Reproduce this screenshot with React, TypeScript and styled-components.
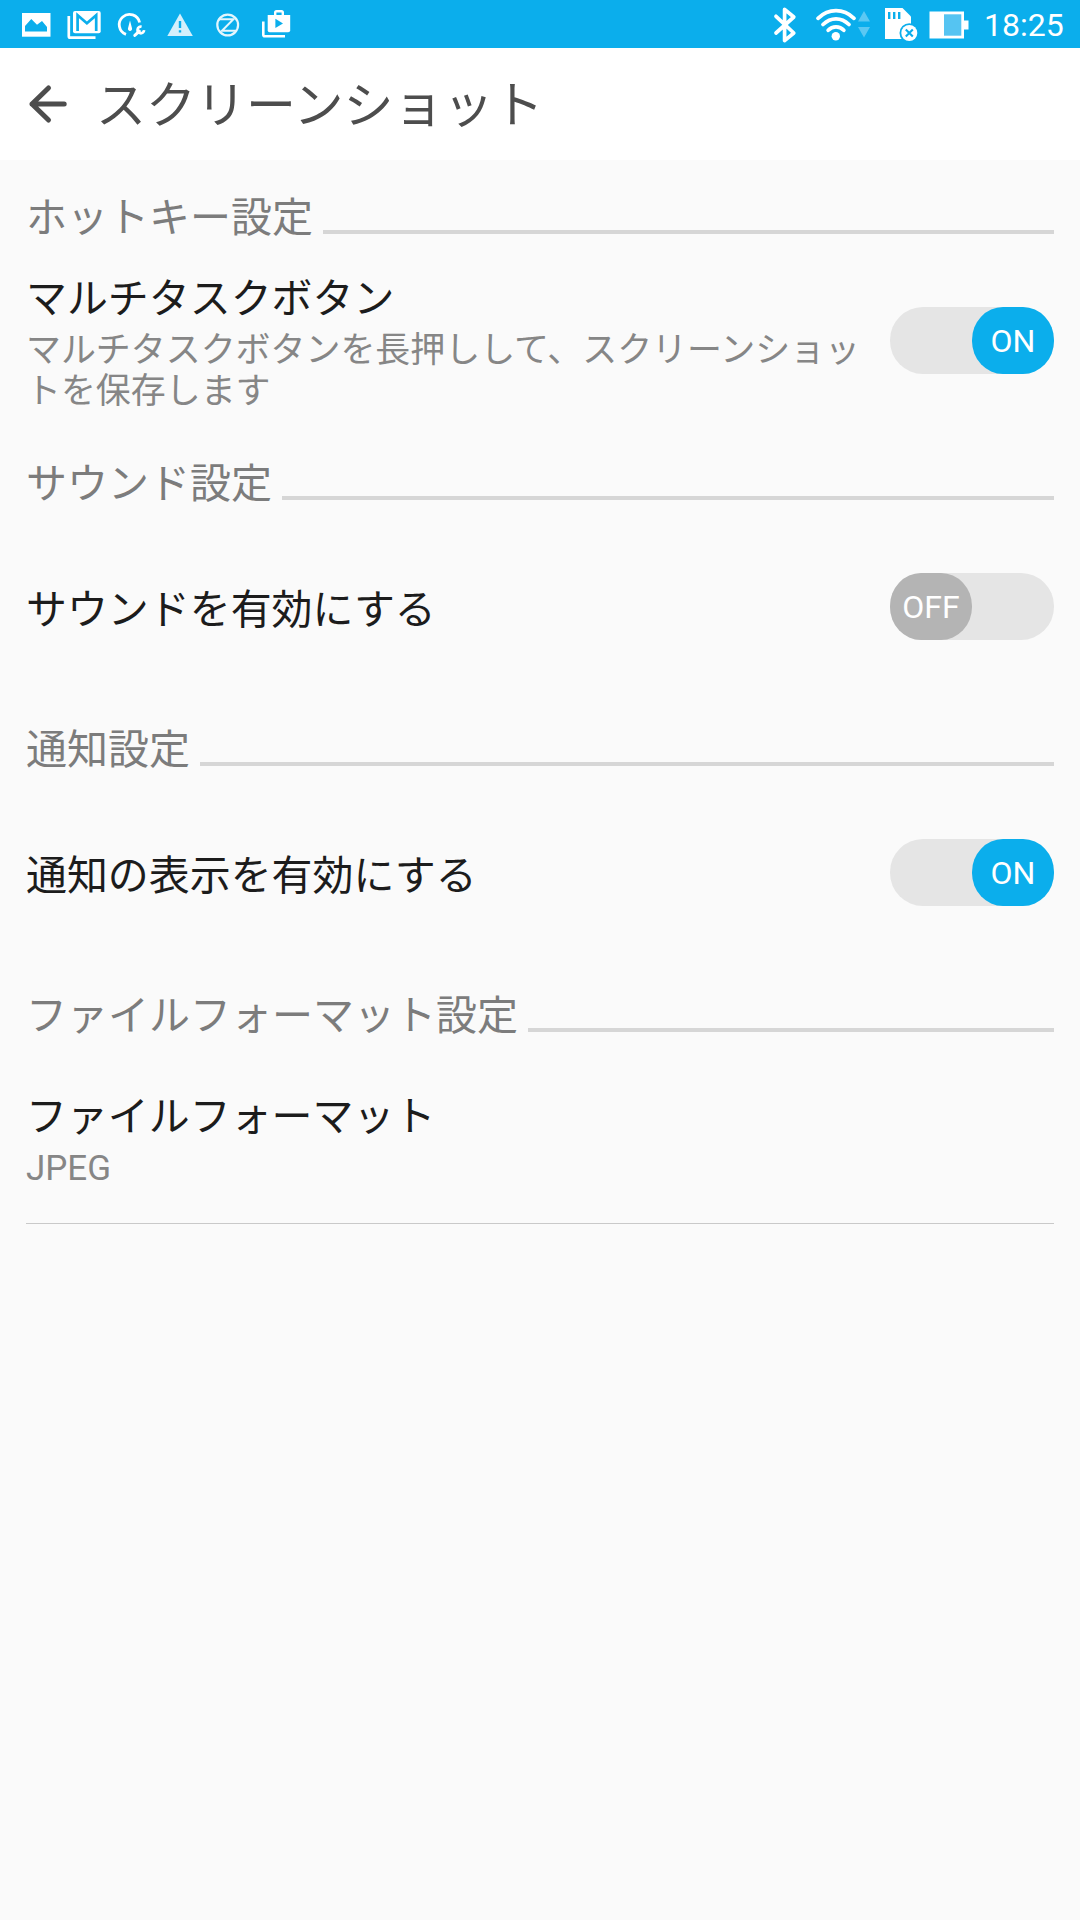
import React, { useState } from "react";
import styled, { createGlobalStyle } from "styled-components";

const BLUE = "#0baeec";

const GlobalStyle = createGlobalStyle`
  * { box-sizing: border-box; }
  body {
    margin: 0;
    background: #fafafa;
    font-family: Roboto, "Noto Sans CJK JP", sans-serif;
  }
`;

const Screen = styled.div`
  width: 1080px;
  height: 1920px;
  overflow: hidden;
  background: #fafafa;
`;

const StatusBar = styled.div`
  display: flex;
  justify-content: space-between;
  height: 48px;
  padding: 0 16px 0 12px;
  background: ${BLUE};
  color: #fff;
`;

const StatusGroup = styled.div`
  display: flex;
  align-items: center;
`;

const StatusSvg = styled.svg`
  display: block;
  flex: none;
  height: 48px;
`;

const Clock = styled.span`
  width: 92px;
  padding-left: 12px;
  font-size: 32px;
  line-height: 48px;
  padding-top: 2px;
  white-space: nowrap;
`;

const AppBar = styled.header`
  display: flex;
  align-items: center;
  height: 112px;
  padding-left: 26px;
  background: #fff;
  color: #4d4d4d;
`;

const BackButton = styled.button`
  display: flex;
  width: 70px;
  padding: 0;
  border: 0;
  background: none;
  color: inherit;
`;

const Title = styled.h1`
  margin: 0;
  padding-top: 4px;
  font-size: 50px;
  font-weight: 400;
  line-height: 60px;
`;

const Section = styled.section`
  height: 266px;
  padding: 0 26px;
`;

const SectionHeader = styled.div`
  display: flex;
  align-items: flex-end;
  gap: 10px;
  height: 82px;
`;

const SectionLabel = styled.h2`
  margin: 0;
  color: #7c7c7c;
  font-size: 41px;
  font-weight: 400;
  line-height: 47px;
`;

const Rule = styled.div`
  flex: 1;
  height: 4px;
  margin-bottom: 8px;
  background: #d6d6d6;
`;

const Row = styled.div<{ $divided?: boolean }>`
  display: flex;
  align-items: ${(p) => (p.$divided ? "flex-start" : "center")};
  justify-content: space-between;
  height: ${(p) => (p.$divided ? 137 : 171)}px;
  margin-top: ${(p) => (p.$divided ? 47 : 13)}px;
  border-bottom: ${(p) => (p.$divided ? "1px solid #c9c9c9" : "0")};
`;

const RowText = styled.div`
  width: 846px;
  padding-top: 6px;
`;

const RowTitle = styled.div`
  color: #1c1c1c;
  font-size: 40.95px;
  line-height: 48px;
`;

const Summary = styled.div`
  margin-top: 7px;
  color: #868686;
  font-size: 34.95px;
  line-height: 41px;
  word-break: break-all;
  line-break: anywhere;
`;

const Track = styled.button<{ $on: boolean }>`
  display: flex;
  flex: none;
  justify-content: ${(p) => (p.$on ? "flex-end" : "flex-start")};
  width: 164px;
  height: 67px;
  padding: 0;
  border: 0;
  border-radius: 33px;
  background: #e5e5e5;
`;

const Thumb = styled.span<{ $on: boolean }>`
  display: flex;
  align-items: center;
  justify-content: center;
  width: 82px;
  height: 67px;
  border-radius: 31px / 33px;
  background: ${(p) => (p.$on ? BLUE : "#b4b4b4")};
  color: #fff;
  font-family: Roboto, sans-serif;
  font-size: 32px;
  line-height: 67px;
  padding-top: 2px;
`;

type IconProps = { x: number; w: number; children: React.ReactNode };

const StatusIcon = ({ x, w, children }: IconProps) => (
  <StatusSvg width={w} viewBox={`${x} 0 ${w} 48`} fill="#fff">
    {children}
  </StatusSvg>
);

const NotificationIcons = () => (
  <StatusGroup>
    <StatusIcon x={12} w={48}>
      <path d="M22 13H50.5V36.7H22Z" />
      <path fill={BLUE} d="M25 31.5V26L31.3 19L37 24.7L42 21L47 27V31.5Z" />
    </StatusIcon>
    <StatusIcon x={60} w={48}>
      <path fill="none" stroke="#fff" strokeWidth="2.7" d="M68.8 16V36.2Q68.8 37.7 70.3 37.7H95.5" />
      <rect x="73" y="11" width="27.7" height="22.2" rx="2" />
      <path fill="none" stroke={BLUE} strokeWidth="2.7" d="M77.6 31V15.2L86.9 23.2L96.2 15.2V31" />
    </StatusIcon>
    <StatusIcon x={108} w={48}>
      <path fill="none" stroke="#fff" strokeWidth="2.8" d="M126 34.4A10.3 10.3 0 1 1 139.6 22.5" />
      <path d="M130 20.5L132 28.2A2.1 2.1 0 1 1 128 28.2Z" />
      <path fill="none" stroke="#fff" strokeWidth="3" strokeLinecap="round" d="M134.8 35.4L139.4 31.2" />
      <path fill="none" stroke="#fff" strokeWidth="2.7" d="M141.6 26.8A3.3 3.3 0 1 0 144.1 30.2" />
    </StatusIcon>
    <StatusIcon x={156} w={48}>
      <path fill="#d4f0fc" d="M180 13.5L192.8 36H167.3Z" />
      <path fill={BLUE} d="M178.8 21H181.2V28H178.8ZM178.8 30.2H181.2V32.6H178.8Z" />
    </StatusIcon>
    <StatusIcon x={204} w={48}>
      <circle cx="227.7" cy="25" r="10.4" fill="none" stroke="#e3f6fd" strokeWidth="2.2" />
      <path fill="none" stroke="#e3f6fd" strokeWidth="2" d="M219 19.3H233.4L222 30.8H236.4" />
    </StatusIcon>
    <StatusIcon x={252} w={48}>
      <path fill="none" stroke="#fff" strokeWidth="2.6" d="M263.3 21.5V34.7Q263.3 36.2 264.8 36.2H285" />
      <path fill="none" stroke="#fff" strokeWidth="2.4" d="M275.2 16V12.5Q275.2 11.2 276.5 11.2H281.5Q282.8 11.2 282.8 12.5V16" />
      <path d="M267.7 15H290.2V30.2Q290.2 32.2 288.2 32.2H269.7Q267.7 32.2 267.7 30.2Z" />
      <path fill={BLUE} d="M275.4 18.8V28L283 23.4Z" />
    </StatusIcon>
  </StatusGroup>
);

const SystemIcons = () => (
  <StatusGroup>
    <StatusIcon x={766} w={42}>
      <path
        fill="none"
        stroke="#fff"
        strokeWidth="3.7"
        strokeLinecap="round"
        strokeLinejoin="round"
        d="M776 16.3L793.8 33L784.6 40.6V9.3L793.8 17L776 33"
      />
    </StatusIcon>
    <StatusIcon x={808} w={64}>
      <circle cx="835.8" cy="36.3" r="4.2" />
      <g fill="none" stroke="#fff" strokeWidth="3.8" strokeLinecap="round">
        <path d="M818 18.3Q826 10.7 836 10.7T854 18.3" />
        <path d="M823 24.5Q828.8 18.8 836 18.8T849 24.5" />
        <path d="M828.2 30.3Q831.4 26.8 836 26.8T843.8 30.3" />
      </g>
      <path fill="#5bc8f3" d="M864 11L870 21.5H858ZM864 37.5L870 27H858Z" />
    </StatusIcon>
    <StatusIcon x={872} w={50}>
      <path d="M885 8H902.5L911 16.5V39H885Z" />
      <path fill={BLUE} d="M888 12H890.4V19H888ZM893 12H895.4V19H893ZM898 12H900.4V19H898Z" />
      <circle cx="909.3" cy="33" r="9.8" fill={BLUE} />
      <circle cx="909.3" cy="33" r="8" />
      <path fill="none" stroke={BLUE} strokeWidth="2.1" d="M905.8 29.5L912.8 36.5M912.8 29.5L905.8 36.5" />
    </StatusIcon>
    <StatusIcon x={922} w={50}>
      <path d="M929.5 11.5H964V20.5H968.5V29.5H964V38.5H929.5Z" />
      <path fill="#55c4f2" d="M944 14.3H961.3V35.7H944Z" />
    </StatusIcon>
    <Clock>18:25</Clock>
  </StatusGroup>
);

const Toggle = ({ initial }: { initial: boolean }) => {
  const [on, setOn] = useState(initial);
  return (
    <Track $on={on} role="switch" aria-checked={on} onClick={() => setOn(!on)}>
      <Thumb $on={on}>{on ? "ON" : "OFF"}</Thumb>
    </Track>
  );
};

type Setting = { section: string; title: string; summary?: string; on?: boolean };

const SETTINGS: Setting[] = [
  {
    section: "ホットキー設定",
    title: "マルチタスクボタン",
    summary: "マルチタスクボタンを長押しして、スクリーンショットを保存します",
    on: true,
  },
  { section: "サウンド設定", title: "サウンドを有効にする", on: false },
  { section: "通知設定", title: "通知の表示を有効にする", on: true },
  { section: "ファイルフォーマット設定", title: "ファイルフォーマット", summary: "JPEG" },
];

export default function App() {
  return (
    <Screen lang="ja">
      <GlobalStyle />
      <StatusBar>
        <NotificationIcons />
        <SystemIcons />
      </StatusBar>
      <AppBar>
        <BackButton aria-label="戻る">
          <svg
            width="44"
            height="44"
            viewBox="0 0 44 44"
            fill="none"
            stroke="currentColor"
            strokeWidth="5"
            strokeLinecap="round"
            strokeLinejoin="round"
          >
            <path d="M22.5 6L6 22L22.5 38M6 22H38.2" />
          </svg>
        </BackButton>
        <Title>スクリーンショット</Title>
      </AppBar>
      {SETTINGS.map((s) => (
        <Section key={s.section}>
          <SectionHeader>
            <SectionLabel>{s.section}</SectionLabel>
            <Rule />
          </SectionHeader>
          <Row $divided={s.on === undefined}>
            <RowText>
              <RowTitle>{s.title}</RowTitle>
              {s.summary && <Summary>{s.summary}</Summary>}
            </RowText>
            {s.on !== undefined && <Toggle initial={s.on} />}
          </Row>
        </Section>
      ))}
    </Screen>
  );
}
